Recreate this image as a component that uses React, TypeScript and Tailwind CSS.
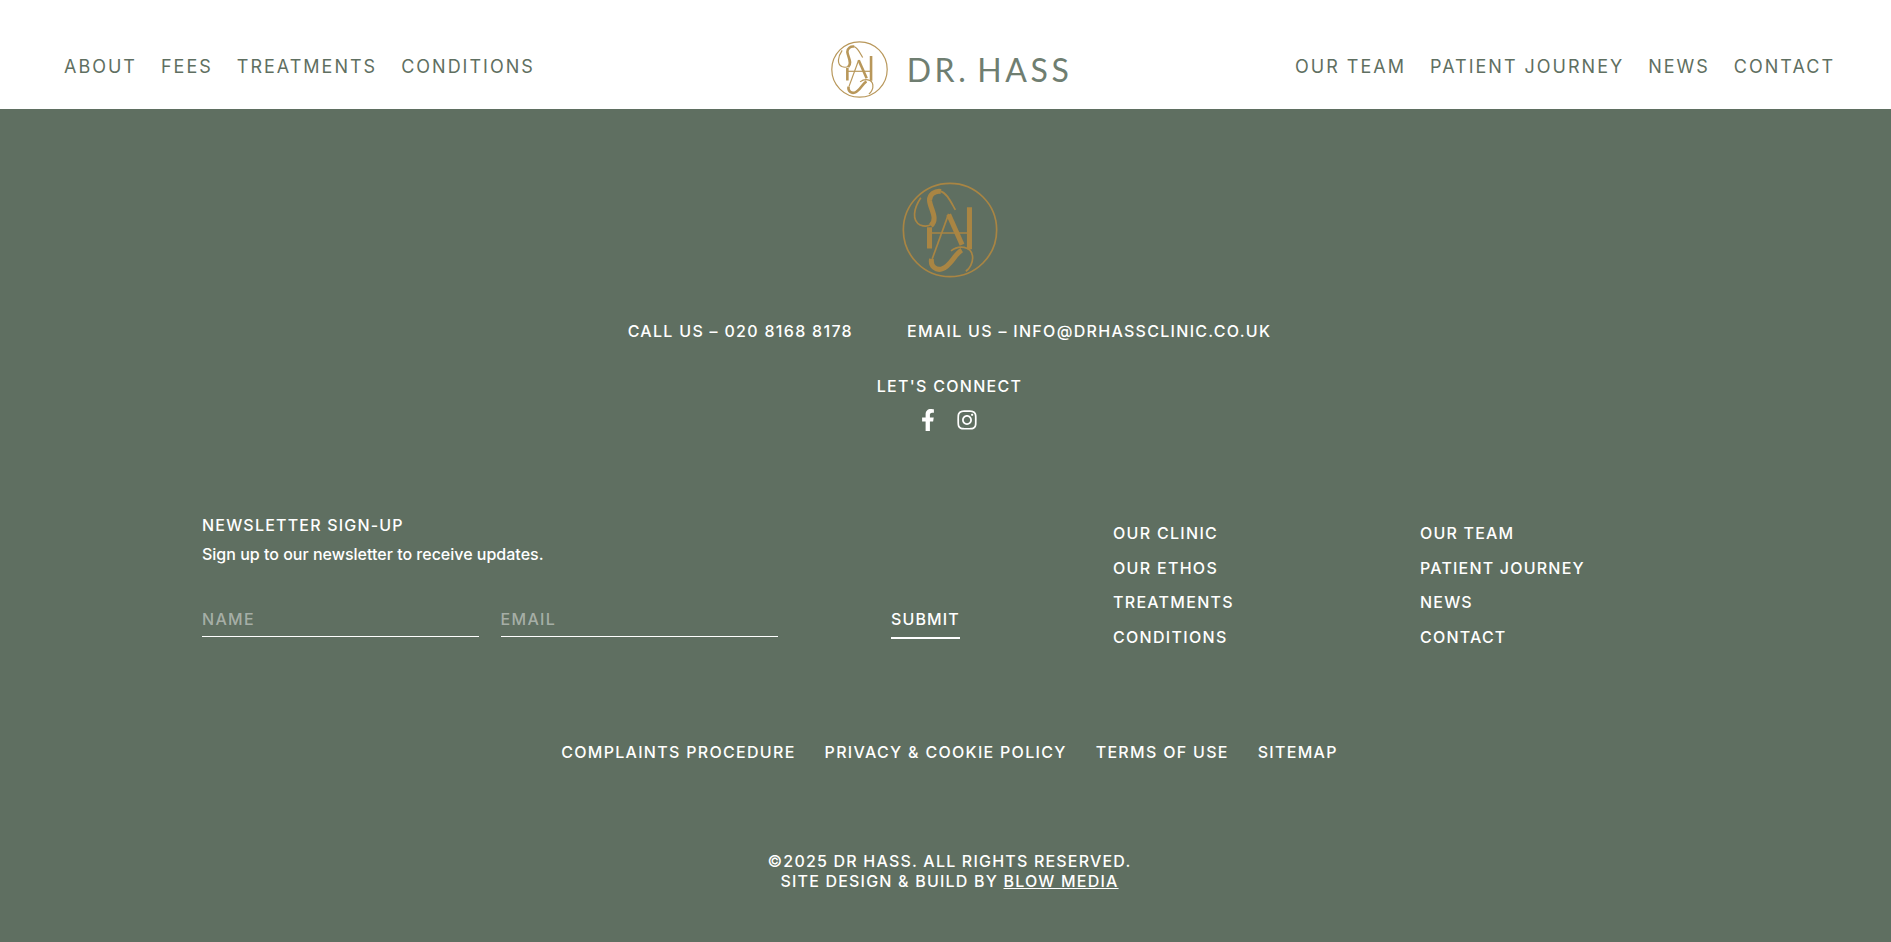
import { FaFacebookF, FaInstagram } from "react-icons/fa";

function Monogram({ className, thin, thick }: { className: string; thin: number; thick: number }) {
  return (
    <svg viewBox="66 35 286 286" fill="none" stroke="currentColor" className={className}>
      <circle cx="209" cy="178" r="139" strokeWidth={thin} />
      {/* top S */}
      <path d="M122 82C100 115 95 150 120 163C132 168 145 168 155 160" strokeWidth={thin} />
      <path d="M152 165C175 145 150 115 148 90C147 72 165 60 182 63" strokeWidth={thick} />
      <path d="M182 63C200 68 212 95 225 118" strokeWidth={thin} />
      {/* H */}
      <path d="M148 170V233M267 110V235" strokeWidth={thick} />
      <path d="M148 187H267" strokeWidth={thin} />
      {/* A */}
      <path d="M205 130L156 264" strokeWidth={thin} />
      <path d="M205 132L245 222" strokeWidth={thick} />
      {/* bottom S */}
      <path d="M244 238C222 250 212 285 185 294C168 299 150 287 154 264" strokeWidth={thick} />
      <path d="M212 240C235 222 272 226 276 255C279 275 266 295 256 301" strokeWidth={thin} />
    </svg>
  );
}

const leftNav = ["ABOUT", "FEES", "TREATMENTS", "CONDITIONS"];
const rightNav = ["OUR TEAM", "PATIENT JOURNEY", "NEWS", "CONTACT"];
const col1 = ["OUR CLINIC", "OUR ETHOS", "TREATMENTS", "CONDITIONS"];
const col2 = ["OUR TEAM", "PATIENT JOURNEY", "NEWS", "CONTACT"];
const legal = ["COMPLAINTS PROCEDURE", "PRIVACY & COOKIE POLICY", "TERMS OF USE", "SITEMAP"];

function NavLinks({ items }: { items: string[] }) {
  return (
    <nav className="flex gap-[24px] text-[18px] leading-[24px] tracking-[2px] text-[#5f6f61]">
      {items.map((item) => (
        <a key={item} className="whitespace-nowrap">{item}</a>
      ))}
    </nav>
  );
}

function LinkColumn({ items, className }: { items: string[]; className: string }) {
  return (
    <ul className={`flex flex-col gap-[14.6px] ${className}`}>
      {items.map((item) => (
        <li key={item} className="leading-[20px] whitespace-nowrap">{item}</li>
      ))}
    </ul>
  );
}

export default function App() {
  return (
    <div className="min-h-[942px] flex flex-col bg-[#5f6f61] font-['Inter',sans-serif]">
      {/* Header */}
      <header className="h-[109px] shrink-0 bg-white grid grid-cols-[1fr_auto_1fr] items-start pl-[64px] pr-[56px] pt-[55px]">
        <NavLinks items={leftNav} />
        <div className="flex items-center gap-[19px] ml-[4px] -mt-[14px] text-[#b8975a]">
          <Monogram className="w-[57px] h-[57px]" thin={6} thick={13} />
          <span className="font-['Lato',sans-serif] text-[32px] leading-[40px] tracking-[3.6px] [word-spacing:-4px] text-[#6f7e71]">DR. HASS</span>
        </div>
        <div className="flex justify-end">
          <NavLinks items={rightNav} />
        </div>
      </header>

      {/* Footer */}
      <footer className="flex-1 flex flex-col items-center pl-[8px] pt-[73px] text-white text-[16px] font-medium tracking-[1.3px]">
        <Monogram className="w-[96px] h-[96px] text-[#a98543]" thin={5} thick={15} />

        <div className="mt-[43px] flex gap-[54px] leading-[20px]">
          <span>CALL US – 020 8168 8178</span>
          <span>EMAIL US – INFO@DRHASSCLINIC.CO.UK</span>
        </div>

        <p className="mt-[35px] leading-[20px]">LET'S CONNECT</p>
        <div className="mt-[13px] -ml-[4px] flex items-center gap-[17px] text-[22px]">
          <FaFacebookF />
          <FaInstagram />
        </div>

        {/* Newsletter and links */}
        <div className="mt-[84px] w-full pl-[194px] flex items-start">
          <form className="w-[758px] shrink-0">
            <p className="leading-[20px] tracking-[1.2px]">NEWSLETTER SIGN-UP</p>
            <p className="mt-[9px] leading-[20px] tracking-normal">Sign up to our newsletter to receive updates.</p>
            <div className="mt-[37px] flex items-end">
              <input placeholder="NAME" className="w-[277px] h-[35px] border-b border-white bg-transparent outline-none tracking-[1.3px] placeholder:text-white/45" />
              <input placeholder="EMAIL" className="ml-[22px] w-[278px] h-[35px] border-b border-white bg-transparent outline-none tracking-[1.3px] placeholder:text-white/45" />
              <button type="button" className="ml-[113px] w-[69px] h-[38px] -mb-[2px] border-b-2 border-white text-left leading-[20px] tracking-[1.1px]">SUBMIT</button>
            </div>
          </form>
          <LinkColumn items={col1} className="ml-[153px] mt-[8px] w-[307px]" />
          <LinkColumn items={col2} className="mt-[8px] tracking-[1.2px]" />
        </div>

        <div className="mt-[95px] flex gap-[29px] leading-[20px] tracking-[1.3px]">
          {legal.map((item) => (
            <a key={item} className="whitespace-nowrap">{item}</a>
          ))}
        </div>

        <div className="mt-[89px] text-center leading-[20px] tracking-[1.2px]">
          <p>©2025 DR HASS. ALL RIGHTS RESERVED.</p>
          <p>SITE DESIGN &amp; BUILD BY <span className="underline">BLOW MEDIA</span></p>
        </div>
      </footer>
    </div>
  );
}
